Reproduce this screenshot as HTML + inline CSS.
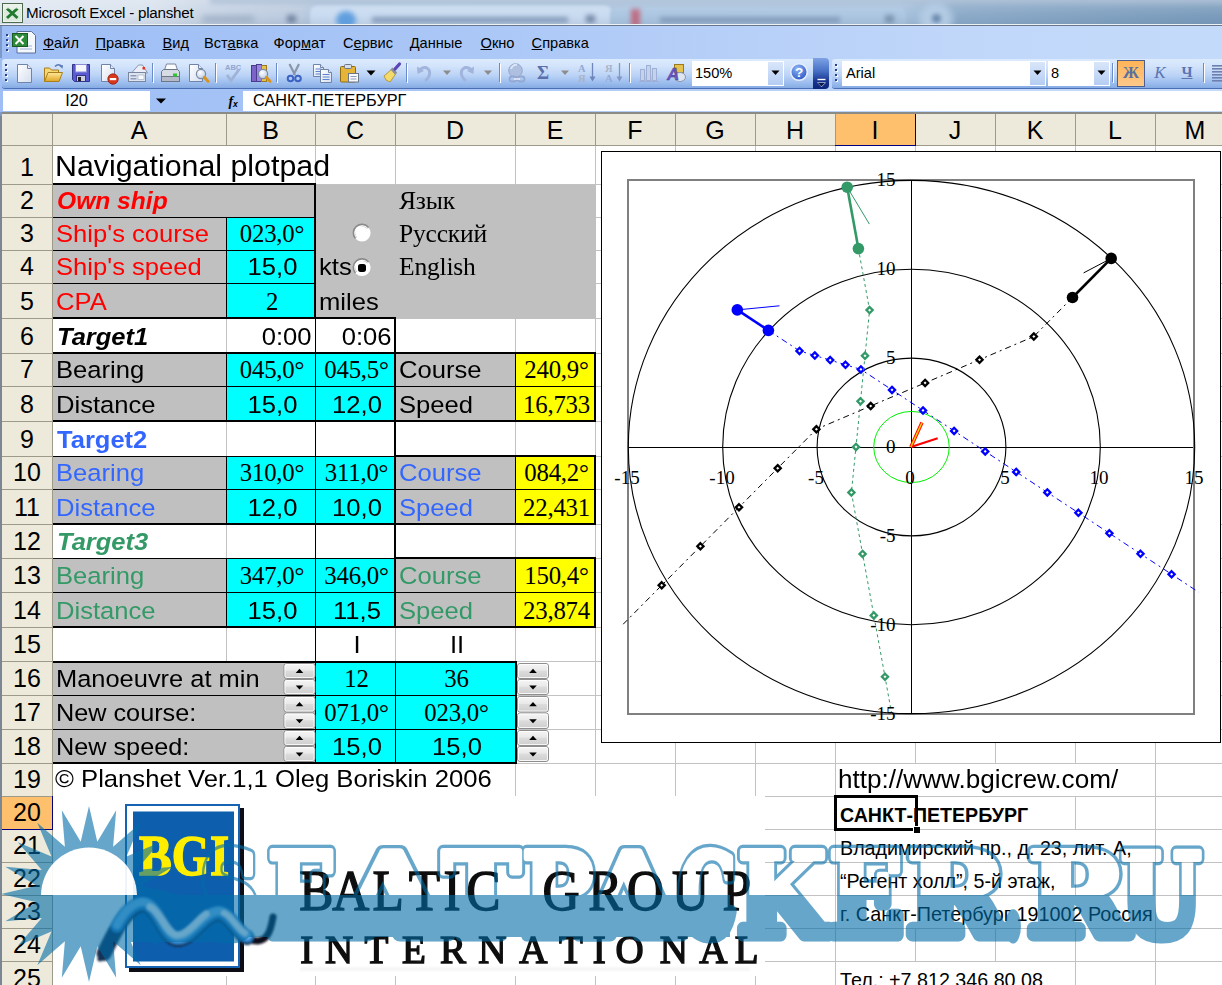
<!DOCTYPE html>
<html><head><meta charset="utf-8"><title>Microsoft Excel - planshet</title>
<style>
html,body{margin:0;padding:0}
body{width:1222px;height:985px;overflow:hidden;position:relative;background:#fff;font-family:"Liberation Sans",sans-serif}
.abs{position:absolute}
.t{position:absolute;white-space:nowrap;line-height:40px;height:40px;color:#000;font-family:"Liberation Sans",sans-serif;font-size:25px}
.mn{font:14.6px/22px "Liberation Sans",sans-serif;color:#000;white-space:nowrap;text-align:center}
.tb{font:14.6px/22px "Liberation Sans",sans-serif;color:#000;white-space:nowrap}

</style></head>
<body>
<svg class="abs" style="left:0;top:0" width="1222" height="985" viewBox="0 0 1222 985" shape-rendering="crispEdges"><rect x="0" y="112" width="1222" height="873" fill="#fff"/><rect x="226" y="146" width="1" height="839" fill="#c2c2c2"/><rect x="315" y="146" width="1" height="839" fill="#c2c2c2"/><rect x="395" y="146" width="1" height="839" fill="#c2c2c2"/><rect x="515" y="146" width="1" height="839" fill="#c2c2c2"/><rect x="595" y="146" width="1" height="839" fill="#c2c2c2"/><rect x="675" y="146" width="1" height="839" fill="#c2c2c2"/><rect x="755" y="146" width="1" height="839" fill="#c2c2c2"/><rect x="835" y="146" width="1" height="839" fill="#c2c2c2"/><rect x="915" y="146" width="1" height="839" fill="#c2c2c2"/><rect x="995" y="146" width="1" height="839" fill="#c2c2c2"/><rect x="1075" y="146" width="1" height="839" fill="#c2c2c2"/><rect x="1155" y="146" width="1" height="839" fill="#c2c2c2"/><rect x="1235" y="146" width="1" height="839" fill="#c2c2c2"/><rect x="53" y="184" width="1169" height="1" fill="#c2c2c2"/><rect x="53" y="217" width="1169" height="1" fill="#c2c2c2"/><rect x="53" y="250" width="1169" height="1" fill="#c2c2c2"/><rect x="53" y="283" width="1169" height="1" fill="#c2c2c2"/><rect x="53" y="318" width="1169" height="1" fill="#c2c2c2"/><rect x="53" y="353" width="1169" height="1" fill="#c2c2c2"/><rect x="53" y="386" width="1169" height="1" fill="#c2c2c2"/><rect x="53" y="421" width="1169" height="1" fill="#c2c2c2"/><rect x="53" y="456" width="1169" height="1" fill="#c2c2c2"/><rect x="53" y="489" width="1169" height="1" fill="#c2c2c2"/><rect x="53" y="524" width="1169" height="1" fill="#c2c2c2"/><rect x="53" y="558" width="1169" height="1" fill="#c2c2c2"/><rect x="53" y="592" width="1169" height="1" fill="#c2c2c2"/><rect x="53" y="627" width="1169" height="1" fill="#c2c2c2"/><rect x="53" y="661" width="1169" height="1" fill="#c2c2c2"/><rect x="53" y="695" width="1169" height="1" fill="#c2c2c2"/><rect x="53" y="729" width="1169" height="1" fill="#c2c2c2"/><rect x="53" y="763" width="1169" height="1" fill="#c2c2c2"/><rect x="53" y="796" width="1169" height="1" fill="#c2c2c2"/><rect x="53" y="829" width="1169" height="1" fill="#c2c2c2"/><rect x="53" y="862" width="1169" height="1" fill="#c2c2c2"/><rect x="53" y="895" width="1169" height="1" fill="#c2c2c2"/><rect x="53" y="928" width="1169" height="1" fill="#c2c2c2"/><rect x="53" y="961" width="1169" height="1" fill="#c2c2c2"/><rect x="53" y="995" width="1169" height="1" fill="#c2c2c2"/><rect x="226" y="146" width="1" height="37" fill="#fff"/><rect x="226" y="764" width="1" height="32" fill="#fff"/><rect x="315" y="764" width="1" height="32" fill="#fff"/><rect x="395" y="764" width="1" height="32" fill="#fff"/><rect x="915" y="764" width="1" height="32" fill="#fff"/><rect x="995" y="764" width="1" height="32" fill="#fff"/><rect x="1075" y="764" width="1" height="32" fill="#fff"/><rect x="915" y="797" width="1" height="32" fill="#fff"/><rect x="995" y="797" width="1" height="32" fill="#fff"/><rect x="915" y="830" width="1" height="32" fill="#fff"/><rect x="995" y="830" width="1" height="32" fill="#fff"/><rect x="1075" y="830" width="1" height="32" fill="#fff"/><rect x="915" y="863" width="1" height="32" fill="#fff"/><rect x="995" y="863" width="1" height="32" fill="#fff"/><rect x="915" y="896" width="1" height="32" fill="#fff"/><rect x="995" y="896" width="1" height="32" fill="#fff"/><rect x="1075" y="896" width="1" height="32" fill="#fff"/><rect x="915" y="962" width="1" height="23" fill="#fff"/><rect x="995" y="962" width="1" height="23" fill="#fff"/><rect x="53" y="185" width="263" height="33" fill="#c0c0c0"/><rect x="53" y="218" width="174" height="101" fill="#c0c0c0"/><rect x="227" y="218" width="89" height="101" fill="#00ffff"/><rect x="316" y="185" width="280" height="134" fill="#c0c0c0"/><rect x="53" y="354" width="174" height="68" fill="#c0c0c0"/><rect x="227" y="354" width="169" height="68" fill="#00ffff"/><rect x="396" y="354" width="120" height="68" fill="#c0c0c0"/><rect x="516" y="354" width="80" height="68" fill="#ffff00"/><rect x="53" y="457" width="174" height="68" fill="#c0c0c0"/><rect x="227" y="457" width="169" height="68" fill="#00ffff"/><rect x="396" y="457" width="120" height="68" fill="#c0c0c0"/><rect x="516" y="457" width="80" height="68" fill="#ffff00"/><rect x="53" y="559" width="174" height="69" fill="#c0c0c0"/><rect x="227" y="559" width="169" height="69" fill="#00ffff"/><rect x="396" y="559" width="120" height="69" fill="#c0c0c0"/><rect x="516" y="559" width="80" height="69" fill="#ffff00"/><rect x="53" y="662" width="263" height="102" fill="#c0c0c0"/><rect x="316" y="662" width="200" height="102" fill="#00ffff"/><rect x="52" y="183" width="264" height="2" fill="#000"/><rect x="314" y="183" width="2" height="136" fill="#000"/><rect x="53" y="217" width="262" height="1" fill="#000"/><rect x="53" y="250" width="262" height="1" fill="#000"/><rect x="53" y="283" width="262" height="1" fill="#000"/><rect x="226" y="217" width="1" height="101" fill="#000"/><rect x="52" y="317" width="344" height="2" fill="#000"/><rect x="315" y="319" width="1" height="34" fill="#000"/><rect x="394" y="317" width="2" height="311" fill="#000"/><rect x="52" y="352" width="544" height="2" fill="#000"/><rect x="53" y="386" width="542" height="1" fill="#000"/><rect x="226" y="353" width="1" height="68" fill="#000"/><rect x="315" y="353" width="1" height="68" fill="#000"/><rect x="515" y="353" width="1" height="68" fill="#000"/><rect x="594" y="352" width="2" height="70" fill="#000"/><rect x="52" y="420" width="544" height="2" fill="#000"/><rect x="53" y="489" width="542" height="1" fill="#000"/><rect x="226" y="456" width="1" height="68" fill="#000"/><rect x="315" y="456" width="1" height="68" fill="#000"/><rect x="515" y="456" width="1" height="68" fill="#000"/><rect x="594" y="455" width="2" height="70" fill="#000"/><rect x="52" y="523" width="544" height="2" fill="#000"/><rect x="53" y="592" width="542" height="1" fill="#000"/><rect x="226" y="558" width="1" height="69" fill="#000"/><rect x="315" y="558" width="1" height="69" fill="#000"/><rect x="515" y="558" width="1" height="69" fill="#000"/><rect x="594" y="557" width="2" height="71" fill="#000"/><rect x="52" y="626" width="544" height="2" fill="#000"/><rect x="315" y="421" width="1" height="35" fill="#000"/><rect x="53" y="456" width="342" height="1" fill="#000"/><rect x="394" y="455" width="202" height="2" fill="#000"/><rect x="315" y="524" width="1" height="34" fill="#000"/><rect x="53" y="558" width="342" height="1" fill="#000"/><rect x="394" y="557" width="202" height="2" fill="#000"/><rect x="315" y="627" width="1" height="34" fill="#000"/><rect x="52" y="661" width="465" height="2" fill="#000"/><rect x="52" y="762" width="465" height="2" fill="#000"/><rect x="515" y="661" width="2" height="103" fill="#000"/><rect x="53" y="695" width="462" height="1" fill="#000"/><rect x="53" y="729" width="462" height="1" fill="#000"/><rect x="395" y="661" width="1" height="102" fill="#000"/><rect x="315" y="661" width="1" height="102" fill="#000"/><rect x="0" y="112" width="1222" height="34" fill="#eeeadb"/><rect x="0" y="146" width="53" height="839" fill="#eeeadb"/><rect x="0" y="112" width="1222" height="2" fill="#8a8a86"/><rect x="0" y="112" width="2" height="873" fill="#7b8694"/><rect x="52" y="114" width="1" height="31" fill="#9d9a8a"/><rect x="226" y="114" width="1" height="31" fill="#9d9a8a"/><rect x="315" y="114" width="1" height="31" fill="#9d9a8a"/><rect x="395" y="114" width="1" height="31" fill="#9d9a8a"/><rect x="515" y="114" width="1" height="31" fill="#9d9a8a"/><rect x="595" y="114" width="1" height="31" fill="#9d9a8a"/><rect x="675" y="114" width="1" height="31" fill="#9d9a8a"/><rect x="755" y="114" width="1" height="31" fill="#9d9a8a"/><rect x="835" y="114" width="1" height="31" fill="#9d9a8a"/><rect x="915" y="114" width="1" height="31" fill="#9d9a8a"/><rect x="995" y="114" width="1" height="31" fill="#9d9a8a"/><rect x="1075" y="114" width="1" height="31" fill="#9d9a8a"/><rect x="1155" y="114" width="1" height="31" fill="#9d9a8a"/><rect x="1235" y="114" width="1" height="31" fill="#9d9a8a"/><rect x="2" y="145" width="1220" height="1" fill="#9d9a8a"/><rect x="2" y="184" width="51" height="1" fill="#9d9a8a"/><rect x="2" y="217" width="51" height="1" fill="#9d9a8a"/><rect x="2" y="250" width="51" height="1" fill="#9d9a8a"/><rect x="2" y="283" width="51" height="1" fill="#9d9a8a"/><rect x="2" y="318" width="51" height="1" fill="#9d9a8a"/><rect x="2" y="353" width="51" height="1" fill="#9d9a8a"/><rect x="2" y="386" width="51" height="1" fill="#9d9a8a"/><rect x="2" y="421" width="51" height="1" fill="#9d9a8a"/><rect x="2" y="456" width="51" height="1" fill="#9d9a8a"/><rect x="2" y="489" width="51" height="1" fill="#9d9a8a"/><rect x="2" y="524" width="51" height="1" fill="#9d9a8a"/><rect x="2" y="558" width="51" height="1" fill="#9d9a8a"/><rect x="2" y="592" width="51" height="1" fill="#9d9a8a"/><rect x="2" y="627" width="51" height="1" fill="#9d9a8a"/><rect x="2" y="661" width="51" height="1" fill="#9d9a8a"/><rect x="2" y="695" width="51" height="1" fill="#9d9a8a"/><rect x="2" y="729" width="51" height="1" fill="#9d9a8a"/><rect x="2" y="763" width="51" height="1" fill="#9d9a8a"/><rect x="2" y="796" width="51" height="1" fill="#9d9a8a"/><rect x="2" y="829" width="51" height="1" fill="#9d9a8a"/><rect x="2" y="862" width="51" height="1" fill="#9d9a8a"/><rect x="2" y="895" width="51" height="1" fill="#9d9a8a"/><rect x="2" y="928" width="51" height="1" fill="#9d9a8a"/><rect x="2" y="961" width="51" height="1" fill="#9d9a8a"/><rect x="2" y="995" width="51" height="1" fill="#9d9a8a"/><rect x="52" y="146" width="1" height="839" fill="#9d9a8a"/><rect x="836" y="114" width="79" height="31" fill="#ffc06e"/><rect x="835" y="145" width="81" height="1" fill="#000080"/><rect x="915" y="114" width="1" height="32" fill="#000080"/><rect x="2" y="797" width="50" height="32" fill="#ffc06e"/><rect x="2" y="829" width="51" height="1" fill="#000080"/><rect x="52" y="796" width="1" height="34" fill="#000080"/></svg>
<div class="t" style="left:52px;top:110.34px;font-size:25px;width:174px;text-align:center;">A</div>
<div class="t" style="left:226px;top:110.34px;font-size:25px;width:89px;text-align:center;">B</div>
<div class="t" style="left:315px;top:110.34px;font-size:25px;width:80px;text-align:center;">C</div>
<div class="t" style="left:395px;top:110.34px;font-size:25px;width:120px;text-align:center;">D</div>
<div class="t" style="left:515px;top:110.34px;font-size:25px;width:80px;text-align:center;">E</div>
<div class="t" style="left:595px;top:110.34px;font-size:25px;width:80px;text-align:center;">F</div>
<div class="t" style="left:675px;top:110.34px;font-size:25px;width:80px;text-align:center;">G</div>
<div class="t" style="left:755px;top:110.34px;font-size:25px;width:80px;text-align:center;">H</div>
<div class="t" style="left:835px;top:110.34px;font-size:25px;width:80px;text-align:center;">I</div>
<div class="t" style="left:915px;top:110.34px;font-size:25px;width:80px;text-align:center;">J</div>
<div class="t" style="left:995px;top:110.34px;font-size:25px;width:80px;text-align:center;">K</div>
<div class="t" style="left:1075px;top:110.34px;font-size:25px;width:80px;text-align:center;">L</div>
<div class="t" style="left:1155px;top:110.34px;font-size:25px;width:80px;text-align:center;">M</div>
<div class="t" style="left:2px;top:147.34px;font-size:25px;width:50px;text-align:center;">1</div>
<div class="t" style="left:2px;top:180.34px;font-size:25px;width:50px;text-align:center;">2</div>
<div class="t" style="left:2px;top:213.34px;font-size:25px;width:50px;text-align:center;">3</div>
<div class="t" style="left:2px;top:246.34px;font-size:25px;width:50px;text-align:center;">4</div>
<div class="t" style="left:2px;top:281.34px;font-size:25px;width:50px;text-align:center;">5</div>
<div class="t" style="left:2px;top:316.34px;font-size:25px;width:50px;text-align:center;">6</div>
<div class="t" style="left:2px;top:349.34px;font-size:25px;width:50px;text-align:center;">7</div>
<div class="t" style="left:2px;top:384.34px;font-size:25px;width:50px;text-align:center;">8</div>
<div class="t" style="left:2px;top:419.34px;font-size:25px;width:50px;text-align:center;">9</div>
<div class="t" style="left:2px;top:452.34px;font-size:25px;width:50px;text-align:center;">10</div>
<div class="t" style="left:2px;top:487.34px;font-size:25px;width:50px;text-align:center;">11</div>
<div class="t" style="left:2px;top:521.34px;font-size:25px;width:50px;text-align:center;">12</div>
<div class="t" style="left:2px;top:555.34px;font-size:25px;width:50px;text-align:center;">13</div>
<div class="t" style="left:2px;top:590.34px;font-size:25px;width:50px;text-align:center;">14</div>
<div class="t" style="left:2px;top:624.34px;font-size:25px;width:50px;text-align:center;">15</div>
<div class="t" style="left:2px;top:658.34px;font-size:25px;width:50px;text-align:center;">16</div>
<div class="t" style="left:2px;top:692.34px;font-size:25px;width:50px;text-align:center;">17</div>
<div class="t" style="left:2px;top:726.34px;font-size:25px;width:50px;text-align:center;">18</div>
<div class="t" style="left:2px;top:759.34px;font-size:25px;width:50px;text-align:center;">19</div>
<div class="t" style="left:2px;top:792.34px;font-size:25px;width:50px;text-align:center;">20</div>
<div class="t" style="left:2px;top:825.34px;font-size:25px;width:50px;text-align:center;">21</div>
<div class="t" style="left:2px;top:858.34px;font-size:25px;width:50px;text-align:center;">22</div>
<div class="t" style="left:2px;top:891.34px;font-size:25px;width:50px;text-align:center;">23</div>
<div class="t" style="left:2px;top:924.34px;font-size:25px;width:50px;text-align:center;">24</div>
<div class="t" style="left:2px;top:958.34px;font-size:25px;width:50px;text-align:center;">25</div>
<div class="t" style="left:55px;top:145.93px;font-size:29.05px;transform:scaleX(1.045);transform-origin:left center;">Navigational plotpad</div>
<div class="t" style="left:56.800000000000004px;top:180.58px;font-size:24.3px;font-weight:bold;font-style:italic;color:#ff0000;transform:scaleX(1.012);transform-origin:left center;">Own ship</div>
<div class="t" style="left:55.6px;top:213.51px;font-size:24.5px;color:#ff0000;transform:scaleX(1.045);transform-origin:left center;">Ship's course</div>
<div class="t" style="left:55.6px;top:246.51px;font-size:24.5px;color:#ff0000;transform:scaleX(1.045);transform-origin:left center;">Ship's speed</div>
<div class="t" style="left:55.6px;top:281.51px;font-size:24.5px;color:#ff0000;transform:scaleX(1.045);transform-origin:left center;">CPA</div>
<div class="t" style="left:227.5px;top:213.63px;font-size:24.8px;font-family:'Liberation Serif',serif;letter-spacing:-0.2px;width:89px;text-align:center;">023,0°</div>
<div class="t" style="left:227.5px;top:246.51px;font-size:24.5px;width:89px;text-align:center;transform:scaleX(1.045);transform-origin:center center;">15,0</div>
<div class="t" style="left:227.5px;top:281.63px;font-size:24.8px;font-family:'Liberation Serif',serif;letter-spacing:-0.2px;width:89px;text-align:center;">2</div>
<div class="t" style="left:318.6px;top:246.51px;font-size:24.5px;transform:scaleX(1.045);transform-origin:left center;">kts</div>
<div class="t" style="left:318.6px;top:281.51px;font-size:24.5px;transform:scaleX(1.045);transform-origin:left center;">miles</div>
<div class="t" style="left:398.5px;top:181.16px;font-size:24.7px;font-family:'Liberation Serif',serif;letter-spacing:-0.2px;transform:scaleX(1.035);transform-origin:left center;">Язык</div>
<div class="t" style="left:398.5px;top:214.16px;font-size:24.7px;font-family:'Liberation Serif',serif;letter-spacing:-0.2px;transform:scaleX(1.035);transform-origin:left center;">Русский</div>
<div class="t" style="left:398.5px;top:247.16px;font-size:24.7px;font-family:'Liberation Serif',serif;letter-spacing:-0.2px;transform:scaleX(1.035);transform-origin:left center;">English</div>
<div class="t" style="left:56.800000000000004px;top:316.58px;font-size:24.3px;font-weight:bold;font-style:italic;transform:scaleX(1.05);transform-origin:left center;">Target1</div>
<div class="t" style="left:226px;top:316.51px;font-size:24.5px;width:85.5px;text-align:right;transform:scaleX(1.045);transform-origin:right center;">0:00</div>
<div class="t" style="left:315px;top:316.51px;font-size:24.5px;width:76.5px;text-align:right;transform:scaleX(1.045);transform-origin:right center;">0:06</div>
<div class="t" style="left:55.6px;top:349.51px;font-size:24.5px;transform:scaleX(1.045);transform-origin:left center;">Bearing</div>
<div class="t" style="left:55.6px;top:384.51px;font-size:24.5px;transform:scaleX(1.045);transform-origin:left center;">Distance</div>
<div class="t" style="left:227.5px;top:349.63px;font-size:24.8px;font-family:'Liberation Serif',serif;letter-spacing:-0.2px;width:89px;text-align:center;">045,0°</div>
<div class="t" style="left:316.5px;top:349.63px;font-size:24.8px;font-family:'Liberation Serif',serif;letter-spacing:-0.2px;width:80px;text-align:center;">045,5°</div>
<div class="t" style="left:227.5px;top:384.51px;font-size:24.5px;width:89px;text-align:center;transform:scaleX(1.045);transform-origin:center center;">15,0</div>
<div class="t" style="left:316.5px;top:384.51px;font-size:24.5px;width:80px;text-align:center;transform:scaleX(1.045);transform-origin:center center;">12,0</div>
<div class="t" style="left:399.40000000000003px;top:349.51px;font-size:24.5px;transform:scaleX(1.045);transform-origin:left center;">Course</div>
<div class="t" style="left:399.40000000000003px;top:384.51px;font-size:24.5px;transform:scaleX(1.045);transform-origin:left center;">Speed</div>
<div class="t" style="left:516.5px;top:349.63px;font-size:24.8px;font-family:'Liberation Serif',serif;letter-spacing:-0.2px;width:80px;text-align:center;">240,9°</div>
<div class="t" style="left:516.5px;top:384.63px;font-size:24.8px;font-family:'Liberation Serif',serif;letter-spacing:-0.2px;width:80px;text-align:center;">16,733</div>
<div class="t" style="left:56.800000000000004px;top:419.58px;font-size:24.3px;font-weight:bold;color:#3366ff;transform:scaleX(1.05);transform-origin:left center;">Target2</div>
<div class="t" style="left:55.6px;top:452.51px;font-size:24.5px;color:#3366ff;transform:scaleX(1.045);transform-origin:left center;">Bearing</div>
<div class="t" style="left:55.6px;top:487.51px;font-size:24.5px;color:#3366ff;transform:scaleX(1.045);transform-origin:left center;">Distance</div>
<div class="t" style="left:227.5px;top:452.63px;font-size:24.8px;font-family:'Liberation Serif',serif;letter-spacing:-0.2px;width:89px;text-align:center;">310,0°</div>
<div class="t" style="left:316.5px;top:452.63px;font-size:24.8px;font-family:'Liberation Serif',serif;letter-spacing:-0.2px;width:80px;text-align:center;">311,0°</div>
<div class="t" style="left:227.5px;top:487.51px;font-size:24.5px;width:89px;text-align:center;transform:scaleX(1.045);transform-origin:center center;">12,0</div>
<div class="t" style="left:316.5px;top:487.51px;font-size:24.5px;width:80px;text-align:center;transform:scaleX(1.045);transform-origin:center center;">10,0</div>
<div class="t" style="left:399.40000000000003px;top:452.51px;font-size:24.5px;color:#3366ff;transform:scaleX(1.045);transform-origin:left center;">Course</div>
<div class="t" style="left:399.40000000000003px;top:487.51px;font-size:24.5px;color:#3366ff;transform:scaleX(1.045);transform-origin:left center;">Speed</div>
<div class="t" style="left:516.5px;top:452.63px;font-size:24.8px;font-family:'Liberation Serif',serif;letter-spacing:-0.2px;width:80px;text-align:center;">084,2°</div>
<div class="t" style="left:516.5px;top:487.63px;font-size:24.8px;font-family:'Liberation Serif',serif;letter-spacing:-0.2px;width:80px;text-align:center;">22,431</div>
<div class="t" style="left:56.800000000000004px;top:521.58px;font-size:24.3px;font-weight:bold;font-style:italic;color:#339966;transform:scaleX(1.05);transform-origin:left center;">Target3</div>
<div class="t" style="left:55.6px;top:555.51px;font-size:24.5px;color:#339966;transform:scaleX(1.045);transform-origin:left center;">Bearing</div>
<div class="t" style="left:55.6px;top:590.51px;font-size:24.5px;color:#339966;transform:scaleX(1.045);transform-origin:left center;">Distance</div>
<div class="t" style="left:227.5px;top:555.63px;font-size:24.8px;font-family:'Liberation Serif',serif;letter-spacing:-0.2px;width:89px;text-align:center;">347,0°</div>
<div class="t" style="left:316.5px;top:555.63px;font-size:24.8px;font-family:'Liberation Serif',serif;letter-spacing:-0.2px;width:80px;text-align:center;">346,0°</div>
<div class="t" style="left:227.5px;top:590.51px;font-size:24.5px;width:89px;text-align:center;transform:scaleX(1.045);transform-origin:center center;">15,0</div>
<div class="t" style="left:316.5px;top:590.51px;font-size:24.5px;width:80px;text-align:center;transform:scaleX(1.045);transform-origin:center center;">11,5</div>
<div class="t" style="left:399.40000000000003px;top:555.51px;font-size:24.5px;color:#339966;transform:scaleX(1.045);transform-origin:left center;">Course</div>
<div class="t" style="left:399.40000000000003px;top:590.51px;font-size:24.5px;color:#339966;transform:scaleX(1.045);transform-origin:left center;">Speed</div>
<div class="t" style="left:516.5px;top:555.63px;font-size:24.8px;font-family:'Liberation Serif',serif;letter-spacing:-0.2px;width:80px;text-align:center;">150,4°</div>
<div class="t" style="left:516.5px;top:590.63px;font-size:24.8px;font-family:'Liberation Serif',serif;letter-spacing:-0.2px;width:80px;text-align:center;">23,874</div>
<div class="t" style="left:316.5px;top:624.51px;font-size:24.5px;width:80px;text-align:center;transform:scaleX(1.045);transform-origin:center center;">I</div>
<div class="t" style="left:396.5px;top:624.51px;font-size:24.5px;width:120px;text-align:center;transform:scaleX(1.045);transform-origin:center center;">II</div>
<div class="t" style="left:55.6px;top:658.51px;font-size:24.5px;transform:scaleX(1.045);transform-origin:left center;transform:scaleX(1.038)">Manoeuvre at min</div>
<div class="t" style="left:55.6px;top:692.51px;font-size:24.5px;transform:scaleX(1.045);transform-origin:left center;transform:scaleX(1.03)">New course:</div>
<div class="t" style="left:55.6px;top:726.51px;font-size:24.5px;transform:scaleX(1.045);transform-origin:left center;transform:scaleX(1.03)">New speed:</div>
<div class="t" style="left:316.5px;top:658.63px;font-size:24.8px;font-family:'Liberation Serif',serif;letter-spacing:-0.2px;width:80px;text-align:center;">12</div>
<div class="t" style="left:396.5px;top:658.63px;font-size:24.8px;font-family:'Liberation Serif',serif;letter-spacing:-0.2px;width:120px;text-align:center;">36</div>
<div class="t" style="left:316.5px;top:692.63px;font-size:24.8px;font-family:'Liberation Serif',serif;letter-spacing:-0.2px;width:80px;text-align:center;">071,0°</div>
<div class="t" style="left:396.5px;top:692.63px;font-size:24.8px;font-family:'Liberation Serif',serif;letter-spacing:-0.2px;width:120px;text-align:center;">023,0°</div>
<div class="t" style="left:316.5px;top:726.51px;font-size:24.5px;width:80px;text-align:center;transform:scaleX(1.045);transform-origin:center center;">15,0</div>
<div class="t" style="left:396.5px;top:726.51px;font-size:24.5px;width:120px;text-align:center;transform:scaleX(1.045);transform-origin:center center;">15,0</div>
<div class="t" style="left:55px;top:759.48px;font-size:24.6px;transform:scaleX(1.045);transform-origin:left center;transform:scaleX(1.043)">© Planshet Ver.1,1 Oleg Boriskin 2006</div>
<div class="t" style="left:837.5px;top:759.34px;font-size:25.0px;transform:scaleX(1.045);transform-origin:left center;">http://www.bgicrew.com/</div>
<svg class="abs" style="left:0;top:0" width="1222" height="985" viewBox="0 0 1222 985"><defs><linearGradient id="sb" x1="0" y1="0" x2="0" y2="1"><stop offset="0" stop-color="#f6f6f6"/><stop offset=".45" stop-color="#e9e9e9"/><stop offset=".5" stop-color="#dcdcdc"/><stop offset="1" stop-color="#cdcdcd"/></linearGradient></defs><circle cx="362" cy="233" r="8.6" fill="#fff"/><path d="M355.4 238.6A8.6 8.6 0 0 1 368.6 227.4" fill="none" stroke="#8a8a8a" stroke-width="1.6"/><path d="M356.8 237.2A6.8 6.8 0 0 1 367.2 228.8" fill="none" stroke="#555" stroke-width="1.1" opacity=".55"/><circle cx="362" cy="233" r="6.6" fill="#fff"/><circle cx="362" cy="267.5" r="8.6" fill="#fff"/><path d="M355.4 273.1A8.6 8.6 0 0 1 368.6 261.9" fill="none" stroke="#8a8a8a" stroke-width="1.6"/><path d="M356.8 271.7A6.8 6.8 0 0 1 367.2 263.3" fill="none" stroke="#555" stroke-width="1.1" opacity=".55"/><circle cx="362" cy="267.5" r="6.6" fill="#fff"/><rect x="358" y="263.9" width="8" height="8" rx="2.6" fill="#000"/><rect x="284.0" y="663.5" width="31" height="15.0" rx="2.5" fill="url(#sb)" stroke="#8e8e8e"/><rect x="285.0" y="664.5" width="29" height="13.0" rx="1.5" fill="none" stroke="#fff" opacity=".8"/><path d="M295.7 673.0h7.6l-3.8-4.2z" fill="#000"/><rect x="284.0" y="679.5" width="31" height="15.0" rx="2.5" fill="url(#sb)" stroke="#8e8e8e"/><rect x="285.0" y="680.5" width="29" height="13.0" rx="1.5" fill="none" stroke="#fff" opacity=".8"/><path d="M295.7 685.4h7.6l-3.8 4.2z" fill="#000"/><rect x="517.5" y="663.5" width="31" height="15.0" rx="2.5" fill="url(#sb)" stroke="#8e8e8e"/><rect x="518.5" y="664.5" width="29" height="13.0" rx="1.5" fill="none" stroke="#fff" opacity=".8"/><path d="M529.2 673.0h7.6l-3.8-4.2z" fill="#000"/><rect x="517.5" y="679.5" width="31" height="15.0" rx="2.5" fill="url(#sb)" stroke="#8e8e8e"/><rect x="518.5" y="680.5" width="29" height="13.0" rx="1.5" fill="none" stroke="#fff" opacity=".8"/><path d="M529.2 685.4h7.6l-3.8 4.2z" fill="#000"/><rect x="284.0" y="696.5" width="31" height="15.5" rx="2.5" fill="url(#sb)" stroke="#8e8e8e"/><rect x="285.0" y="697.5" width="29" height="13.5" rx="1.5" fill="none" stroke="#fff" opacity=".8"/><path d="M295.7 706.25h7.6l-3.8-4.2z" fill="#000"/><rect x="284.0" y="713.0" width="31" height="15.5" rx="2.5" fill="url(#sb)" stroke="#8e8e8e"/><rect x="285.0" y="714.0" width="29" height="13.5" rx="1.5" fill="none" stroke="#fff" opacity=".8"/><path d="M295.7 719.15h7.6l-3.8 4.2z" fill="#000"/><rect x="517.5" y="696.5" width="31" height="15.5" rx="2.5" fill="url(#sb)" stroke="#8e8e8e"/><rect x="518.5" y="697.5" width="29" height="13.5" rx="1.5" fill="none" stroke="#fff" opacity=".8"/><path d="M529.2 706.25h7.6l-3.8-4.2z" fill="#000"/><rect x="517.5" y="713.0" width="31" height="15.5" rx="2.5" fill="url(#sb)" stroke="#8e8e8e"/><rect x="518.5" y="714.0" width="29" height="13.5" rx="1.5" fill="none" stroke="#fff" opacity=".8"/><path d="M529.2 719.15h7.6l-3.8 4.2z" fill="#000"/><rect x="284.0" y="730.5" width="31" height="15.0" rx="2.5" fill="url(#sb)" stroke="#8e8e8e"/><rect x="285.0" y="731.5" width="29" height="13.0" rx="1.5" fill="none" stroke="#fff" opacity=".8"/><path d="M295.7 740.0h7.6l-3.8-4.2z" fill="#000"/><rect x="284.0" y="746.5" width="31" height="15.0" rx="2.5" fill="url(#sb)" stroke="#8e8e8e"/><rect x="285.0" y="747.5" width="29" height="13.0" rx="1.5" fill="none" stroke="#fff" opacity=".8"/><path d="M295.7 752.4h7.6l-3.8 4.2z" fill="#000"/><rect x="517.5" y="730.5" width="31" height="15.0" rx="2.5" fill="url(#sb)" stroke="#8e8e8e"/><rect x="518.5" y="731.5" width="29" height="13.0" rx="1.5" fill="none" stroke="#fff" opacity=".8"/><path d="M529.2 740.0h7.6l-3.8-4.2z" fill="#000"/><rect x="517.5" y="746.5" width="31" height="15.0" rx="2.5" fill="url(#sb)" stroke="#8e8e8e"/><rect x="518.5" y="747.5" width="29" height="13.0" rx="1.5" fill="none" stroke="#fff" opacity=".8"/><path d="M529.2 752.4h7.6l-3.8 4.2z" fill="#000"/></svg>
<svg class="abs" style="left:0;top:0" width="1222" height="985" viewBox="0 0 1222 985">
<rect x="601.5" y="151.5" width="619" height="591" fill="#fff" stroke="#000" stroke-width="1" shape-rendering="crispEdges"/>
<rect x="628" y="180" width="566" height="534" fill="#fff" stroke="#808080" stroke-width="2" shape-rendering="crispEdges"/>
<ellipse cx="911.5" cy="447.0" rx="94.40" ry="88.88" fill="none" stroke="#000" stroke-width="1.1"/>
<ellipse cx="911.5" cy="447.0" rx="188.80" ry="177.77" fill="none" stroke="#000" stroke-width="1.1"/>
<ellipse cx="911.5" cy="447.0" rx="283.20" ry="266.65" fill="none" stroke="#000" stroke-width="1.1"/>
<line x1="629" y1="447.5" x2="1193" y2="447.5" stroke="#000" stroke-width="1" shape-rendering="crispEdges"/>
<line x1="911.5" y1="181" x2="911.5" y2="713" stroke="#000" stroke-width="1" shape-rendering="crispEdges"/>
<ellipse cx="911.5" cy="447.0" rx="37.76" ry="35.55" fill="none" stroke="#00f000" stroke-width="1"/>
<defs><clipPath id="pc"><rect x="622.5" y="175" width="576" height="541.5"/></clipPath></defs>
<path d="M1072.5 297.5 L1033.8 336.5 L979.5 359.7 L925.1 382.9 L870.7 406.0 L816.4 429.2 L777.7 468.2 L739.0 507.3 L700.4 546.3 L661.7 585.3 L623.1 624.3 L584.4 663.4" fill="none" stroke="#000" stroke-width="1" stroke-dasharray="6 4 2 4" clip-path="url(#pc)"/>
<path d="M1033.8 333.4L1036.9 336.5L1033.8 339.6L1030.7 336.5Z" fill="#fff" stroke="#000" stroke-width="2.3"/>
<path d="M979.5 356.6L982.6 359.7L979.5 362.8L976.4 359.7Z" fill="#fff" stroke="#000" stroke-width="2.3"/>
<path d="M925.1 379.8L928.2 382.9L925.1 386.0L922.0 382.9Z" fill="#fff" stroke="#000" stroke-width="2.3"/>
<path d="M870.7 402.9L873.8 406.0L870.7 409.1L867.6 406.0Z" fill="#fff" stroke="#000" stroke-width="2.3"/>
<path d="M816.4 426.1L819.5 429.2L816.4 432.3L813.3 429.2Z" fill="#fff" stroke="#000" stroke-width="2.3"/>
<path d="M777.7 465.1L780.8 468.2L777.7 471.3L774.6 468.2Z" fill="#fff" stroke="#000" stroke-width="2.3"/>
<path d="M739.0 504.2L742.1 507.3L739.0 510.4L735.9 507.3Z" fill="#fff" stroke="#000" stroke-width="2.3"/>
<path d="M700.4 543.2L703.5 546.3L700.4 549.4L697.3 546.3Z" fill="#fff" stroke="#000" stroke-width="2.3"/>
<path d="M661.7 582.2L664.8 585.3L661.7 588.4L658.6 585.3Z" fill="#fff" stroke="#000" stroke-width="2.3"/>
<line x1="1111.2" y1="258.4" x2="1083.6" y2="272.9" stroke="#000" stroke-width="1"/>
<line x1="1111.2" y1="258.4" x2="1072.5" y2="297.5" stroke="#000" stroke-width="2.6"/>
<circle cx="1111.2" cy="258.4" r="5.8" fill="#000"/>
<circle cx="1072.5" cy="297.5" r="5.8" fill="#000"/>
<path d="M768.4 330.4 L799.5 350.9 L814.8 355.5 L830.2 360.1 L845.5 364.8 L860.9 369.4 L892.0 389.9 L923.0 410.4 L954.1 430.9 L985.2 451.4 L1016.2 471.9 L1047.3 492.4 L1078.4 512.8 L1109.4 533.3 L1140.5 553.8 L1171.6 574.3 L1202.6 594.8" fill="none" stroke="#0000ff" stroke-width="1" stroke-dasharray="6 4 2 4" clip-path="url(#pc)"/>
<path d="M799.5 347.8L802.6 350.9L799.5 354.0L796.4 350.9Z" fill="#fff" stroke="#0000ff" stroke-width="2.3"/>
<path d="M814.8 352.4L817.9 355.5L814.8 358.6L811.7 355.5Z" fill="#fff" stroke="#0000ff" stroke-width="2.3"/>
<path d="M830.2 357.0L833.3 360.1L830.2 363.2L827.1 360.1Z" fill="#fff" stroke="#0000ff" stroke-width="2.3"/>
<path d="M845.5 361.7L848.6 364.8L845.5 367.9L842.4 364.8Z" fill="#fff" stroke="#0000ff" stroke-width="2.3"/>
<path d="M860.9 366.3L864.0 369.4L860.9 372.5L857.8 369.4Z" fill="#fff" stroke="#0000ff" stroke-width="2.3"/>
<path d="M892.0 386.8L895.1 389.9L892.0 393.0L888.9 389.9Z" fill="#fff" stroke="#0000ff" stroke-width="2.3"/>
<path d="M923.0 407.3L926.1 410.4L923.0 413.5L919.9 410.4Z" fill="#fff" stroke="#0000ff" stroke-width="2.3"/>
<path d="M954.1 427.8L957.2 430.9L954.1 434.0L951.0 430.9Z" fill="#fff" stroke="#0000ff" stroke-width="2.3"/>
<path d="M985.2 448.3L988.3 451.4L985.2 454.5L982.1 451.4Z" fill="#fff" stroke="#0000ff" stroke-width="2.3"/>
<path d="M1016.2 468.8L1019.3 471.9L1016.2 475.0L1013.1 471.9Z" fill="#fff" stroke="#0000ff" stroke-width="2.3"/>
<path d="M1047.3 489.3L1050.4 492.4L1047.3 495.5L1044.2 492.4Z" fill="#fff" stroke="#0000ff" stroke-width="2.3"/>
<path d="M1078.4 509.7L1081.5 512.8L1078.4 515.9L1075.3 512.8Z" fill="#fff" stroke="#0000ff" stroke-width="2.3"/>
<path d="M1109.4 530.2L1112.5 533.3L1109.4 536.4L1106.3 533.3Z" fill="#fff" stroke="#0000ff" stroke-width="2.3"/>
<path d="M1140.5 550.7L1143.6 553.8L1140.5 556.9L1137.4 553.8Z" fill="#fff" stroke="#0000ff" stroke-width="2.3"/>
<path d="M1171.6 571.2L1174.7 574.3L1171.6 577.4L1168.5 574.3Z" fill="#fff" stroke="#0000ff" stroke-width="2.3"/>
<line x1="737.3" y1="309.9" x2="779.5" y2="305.8" stroke="#0000ff" stroke-width="1"/>
<line x1="737.3" y1="309.9" x2="768.4" y2="330.4" stroke="#0000ff" stroke-width="2.6"/>
<circle cx="737.3" cy="309.9" r="5.8" fill="#0000ff"/>
<circle cx="768.4" cy="330.4" r="5.8" fill="#0000ff"/>
<path d="M858.4 248.6 L869.6 310.1 L865.0 355.7 L860.5 401.3 L856.0 446.9 L851.4 492.5 L862.6 553.9 L873.8 615.4 L885.0 676.8 L896.1 738.3" fill="none" stroke="#339966" stroke-width="1" stroke-dasharray="3 3" clip-path="url(#pc)"/>
<path d="M869.6 307.0L872.7 310.1L869.6 313.2L866.5 310.1Z" fill="#fff" stroke="#339966" stroke-width="2.3"/>
<path d="M865.0 352.6L868.1 355.7L865.0 358.8L861.9 355.7Z" fill="#fff" stroke="#339966" stroke-width="2.3"/>
<path d="M860.5 398.2L863.6 401.3L860.5 404.4L857.4 401.3Z" fill="#fff" stroke="#339966" stroke-width="2.3"/>
<path d="M856.0 443.8L859.1 446.9L856.0 450.0L852.9 446.9Z" fill="#fff" stroke="#339966" stroke-width="2.3"/>
<path d="M851.4 489.4L854.5 492.5L851.4 495.6L848.3 492.5Z" fill="#fff" stroke="#339966" stroke-width="2.3"/>
<path d="M862.6 550.8L865.7 553.9L862.6 557.0L859.5 553.9Z" fill="#fff" stroke="#339966" stroke-width="2.3"/>
<path d="M873.8 612.3L876.9 615.4L873.8 618.5L870.7 615.4Z" fill="#fff" stroke="#339966" stroke-width="2.3"/>
<path d="M885.0 673.7L888.1 676.8L885.0 679.9L881.9 676.8Z" fill="#fff" stroke="#339966" stroke-width="2.3"/>
<line x1="847.2" y1="187.2" x2="869.4" y2="224.1" stroke="#339966" stroke-width="1"/>
<line x1="847.2" y1="187.2" x2="858.4" y2="248.6" stroke="#339966" stroke-width="2.6"/>
<circle cx="847.2" cy="187.2" r="5.8" fill="#339966"/>
<circle cx="858.4" cy="248.6" r="5.8" fill="#339966"/>
<line x1="910.9" y1="447.0" x2="937.7" y2="438.3" stroke="#ff0000" stroke-width="2.2"/>
<line x1="910.9" y1="447.0" x2="922.0" y2="422.5" stroke="#ff0000" stroke-width="3.4"/>
<line x1="910.9" y1="447.0" x2="922.0" y2="422.5" stroke="#ffcc00" stroke-width="1.6"/>
<text x="627" y="483.5" text-anchor="middle" font-family="Liberation Serif, serif" font-size="19">-15</text>
<text x="895.5" y="720" text-anchor="end" font-family="Liberation Serif, serif" font-size="19">-15</text>
<text x="722" y="483.5" text-anchor="middle" font-family="Liberation Serif, serif" font-size="19">-10</text>
<text x="895.5" y="631" text-anchor="end" font-family="Liberation Serif, serif" font-size="19">-10</text>
<text x="816" y="483.5" text-anchor="middle" font-family="Liberation Serif, serif" font-size="19">-5</text>
<text x="895.5" y="542" text-anchor="end" font-family="Liberation Serif, serif" font-size="19">-5</text>
<text x="910" y="483.5" text-anchor="middle" font-family="Liberation Serif, serif" font-size="19">0</text>
<text x="895.5" y="453" text-anchor="end" font-family="Liberation Serif, serif" font-size="19">0</text>
<text x="1005" y="483.5" text-anchor="middle" font-family="Liberation Serif, serif" font-size="19">5</text>
<text x="895.5" y="364" text-anchor="end" font-family="Liberation Serif, serif" font-size="19">5</text>
<text x="1099" y="483.5" text-anchor="middle" font-family="Liberation Serif, serif" font-size="19">10</text>
<text x="895.5" y="275" text-anchor="end" font-family="Liberation Serif, serif" font-size="19">10</text>
<text x="1194" y="483.5" text-anchor="middle" font-family="Liberation Serif, serif" font-size="19">15</text>
<text x="895.5" y="186" text-anchor="end" font-family="Liberation Serif, serif" font-size="19">15</text>
</svg>
<div class="abs" style="left:53px;top:796px;width:712px;height:180px;background:#fff"></div>
<svg class="abs" style="left:0;top:790px" width="800" height="195" viewBox="0 790 800 195"><defs><linearGradient id="wv" x1="0" y1="0" x2="0" y2="1"><stop offset="0" stop-color="#1d6fb8"/><stop offset=".45" stop-color="#bfe3f7"/><stop offset=".7" stop-color="#5aa9dc"/><stop offset="1" stop-color="#1a2f52"/></linearGradient><filter id="bl1"><feGaussianBlur stdDeviation="0.7"/></filter><filter id="bl2"><feGaussianBlur stdDeviation="1.1"/></filter></defs><g filter="url(#bl1)"><rect x="129" y="808" width="115" height="164" fill="#0a0a14"/><rect x="125" y="804" width="115" height="164" fill="#1262b3"/><rect x="127" y="806" width="111" height="160" fill="#fff"/><rect x="133" y="811.500" width="101" height="150" fill="#0b5fae"/><text x="139" y="875" textLength="90" lengthAdjust="spacingAndGlyphs" font-family="Liberation Serif, serif" font-weight="bold" font-size="56" fill="#ffee00" stroke="#ffee00" stroke-width="1.6">BGI</text></g><g filter="url(#bl2)"><path d="M244 935C252 942 262 944 268 934C271 929 272 923 273 917" fill="none" stroke="#0a0f1c" stroke-width="7" stroke-linecap="round"/><path d="M100 959C106 948 112 936 119 924" fill="none" stroke="#1a2c48" stroke-width="5" stroke-linecap="round"/><path d="M104 952C112 936 125 906 142 903C158 902 164 937 177 938C191 939 203 913 218 912C231 912 237 932 247 936" fill="none" stroke="#163055" stroke-width="15" stroke-linecap="round" transform="translate(0 1.5)"/><path d="M117 926C124 913 132 904 142 903C158 902 164 937 177 938C191 939 203 913 218 912C231 912 237 932 247 936" fill="none" stroke="#2f86d0" stroke-width="13" stroke-linecap="round"/><path d="M117 926C124 913 132 904 142 903C158 902 164 937 177 938C191 939 203 913 218 912C231 912 237 932 247 936" fill="none" stroke="#7cc0ee" stroke-width="8" stroke-linecap="round" transform="translate(0 -1)"/><path d="M150 907C161 912 166 934 177 935C188 935 197 920 206 914" fill="none" stroke="#ffffff" stroke-width="7" stroke-linecap="round"/><path d="M224 913C232 916 237 929 245 933" fill="none" stroke="#ffffff" stroke-width="6" stroke-linecap="round"/></g><g filter="url(#bl1)" font-family="Liberation Serif, serif" fill="#0c0c0c" stroke="#0c0c0c" stroke-width="1.4"><text transform="scale(0.9 1)" x="332.5 369.2 414.0 454.1 492.7 518.1 528.1 602.8 653.5 696.5 746.6 802.7" y="910" font-size="57">BALTIC GROUP</text><text x="300.2 325.0 364.5 401.9 440.0 478.2 519.3 558.9 592.7 615.6 659.7 699.2 734.7" y="962.500" font-size="39">INTERNATIONAL</text></g><rect x="300" y="967" width="450" height="4" fill="#f6f6f6" filter="url(#bl2)"/></svg>
<div class="abs" id="titlebar" style="left:0;top:0;width:1222px;height:26px;overflow:hidden;background:linear-gradient(90deg,#e1e8f1 0,#d9e2ee 150px,#c6d3e4 215px,#bccbdf 300px,#adc3dc 320px,#a9c3de 900px,#8dabc9 950px,#86a5c4 1050px,#7b9cbc 1222px)">
<div class="abs" style="left:310px;top:5px;width:302px;height:30px;border-radius:8px 8px 0 0;background:#c9dbf0;filter:blur(1.6px)"></div>
<div class="abs" style="left:610px;top:7px;width:296px;height:30px;border-radius:8px 8px 0 0;background:#acc6e1;filter:blur(1.6px)"></div>
<div class="abs" style="left:210px;top:-4px;width:1020px;height:8px;background:#9fb5cf;filter:blur(2.5px);opacity:.8"></div>
<div class="abs" style="left:0;top:0;width:1222px;height:26px;background:linear-gradient(180deg,rgba(255,255,255,.18) 0,rgba(255,255,255,0) 60%,rgba(40,70,110,.10) 100%)"></div>
<div class="abs" style="left:336px;top:11px;width:20px;height:18px;border-radius:50%;background:#4f95dc;filter:blur(2.5px);opacity:.85"></div>
<div class="abs" style="left:372px;top:17px;width:196px;height:6px;background:#7088a8;filter:blur(2.5px);opacity:.75"></div>
<div class="abs" style="left:202px;top:16px;width:52px;height:6px;background:#8093ad;filter:blur(3px);opacity:.55"></div>
<div class="abs" style="left:287px;top:15px;width:9px;height:8px;background:#56698a;filter:blur(2.5px);opacity:.7"></div>
<div class="abs" style="left:586px;top:15px;width:9px;height:8px;background:#56698a;filter:blur(2.5px);opacity:.7"></div>
<div class="abs" style="left:631px;top:9px;width:9px;height:18px;background:#c8485c;filter:blur(2.5px);opacity:.7"></div>
<div class="abs" style="left:660px;top:17px;width:180px;height:6px;background:#6f88a8;filter:blur(2.5px);opacity:.65"></div>
<div class="abs" style="left:885px;top:15px;width:9px;height:8px;background:#56698a;filter:blur(2.5px);opacity:.55"></div>
<div class="abs" style="left:919px;top:3px;width:34px;height:32px;border-radius:50%;background:#b9d0e8;filter:blur(3.5px);opacity:.85"></div>
<div class="abs" style="left:932px;top:14px;width:9px;height:9px;border-radius:50%;background:#5f7fa5;filter:blur(2px);opacity:.85"></div>
</div>
<div class="abs" style="left:0;top:24px;width:1222px;height:1px;background:#eef2f7"></div>
<div class="abs" style="left:0;top:25px;width:1222px;height:1px;background:#66778c"></div>
<svg class="abs" style="left:2px;top:3px" width="21" height="20" viewBox="0 0 21 20"><rect x="0.5" y="0.5" width="20" height="19" fill="#eef3ee" stroke="#4c6b4c"/><rect x="2" y="2" width="17" height="16" fill="#dfeadf"/><path d="M5 5.500L15.500 15M15.500 5.500L5 15" stroke="#1f7a2e" stroke-width="3" fill="none"/><path d="M2 2h17v4h-17z" fill="#fff" opacity=".35"/></svg>
<div class="abs" style="left:26px;top:2px;font:15.2px/22px 'Liberation Sans',sans-serif;color:#000;white-space:nowrap;letter-spacing:-0.25px">Microsoft Excel - planshet</div>
<div class="abs" style="left:0;top:26px;width:1222px;height:32px;background:linear-gradient(90deg,#9ebef5 0,#a8c5f6 400px,#c2d8fa 1000px,#c4dafa 1222px)"></div>
<div class="abs" style="left:0;top:26px;width:2px;height:90px;background:#7d99c9"></div>
<svg class="abs" style="left:0;top:26px" width="1222" height="90" viewBox="0 26 1222 90"><rect x="6" y="34" width="2" height="2" fill="#27418a"/><rect x="7" y="35" width="2" height="2" fill="#fff" opacity=".9"/><rect x="6" y="34" width="2" height="2" fill="#27418a"/><rect x="6" y="39" width="2" height="2" fill="#27418a"/><rect x="7" y="40" width="2" height="2" fill="#fff" opacity=".9"/><rect x="6" y="39" width="2" height="2" fill="#27418a"/><rect x="6" y="44" width="2" height="2" fill="#27418a"/><rect x="7" y="45" width="2" height="2" fill="#fff" opacity=".9"/><rect x="6" y="44" width="2" height="2" fill="#27418a"/><rect x="6" y="49" width="2" height="2" fill="#27418a"/><rect x="7" y="50" width="2" height="2" fill="#fff" opacity=".9"/><rect x="6" y="49" width="2" height="2" fill="#27418a"/><g><path d="M17 31.5h14.5l4 4v17.5h-18.5z" fill="#f4f7fb" stroke="#5a6f99"/><path d="M20 46h12M20 49h12" stroke="#9fb3d6"/><rect x="12.5" y="33.5" width="15" height="13" fill="#2e8b3a" stroke="#1c5a25"/><path d="M15.5 36l8 8M23.5 36l-8 8" stroke="#fff" stroke-width="2"/></g></svg>
<div class="abs mn" style="left:43px;top:32px;width:35.5px"><u>Ф</u>айл</div>
<div class="abs mn" style="left:95px;top:32px;width:50.5px"><u>П</u>равка</div>
<div class="abs mn" style="left:162.5px;top:32px;width:25px"><u>В</u>ид</div>
<div class="abs mn" style="left:204px;top:32px;width:52px">Вст<u>а</u>вка</div>
<div class="abs mn" style="left:273px;top:32px;width:53px">Фор<u>м</u>ат</div>
<div class="abs mn" style="left:343px;top:32px;width:50px">С<u>е</u>рвис</div>
<div class="abs mn" style="left:409px;top:32px;width:54px"><u>Д</u>анные</div>
<div class="abs mn" style="left:480px;top:32px;width:35px"><u>О</u>кно</div>
<div class="abs mn" style="left:531.5px;top:32px;width:57.5px"><u>С</u>правка</div>
<div class="abs" style="left:0;top:58px;width:1222px;height:33px;background:linear-gradient(90deg,#9ebef5 0,#a8c5f6 400px,#c2d8fa 1000px,#c4dafa 1222px)"></div>
<div class="abs" style="left:2px;top:59px;width:813px;height:29px;border-radius:3px 0 0 3px;background:linear-gradient(180deg,#dcebfd 0,#d2e3fb 25%,#bdd4f6 55%,#9cbdee 82%,#86abe4 100%);border-bottom:1px solid #4a6fb5"></div>
<div class="abs" style="left:813px;top:58px;width:16px;height:31px;border-radius:0 4px 4px 0;background:linear-gradient(180deg,#7ea2e3 0,#4a73c8 40%,#17348f 75%,#0a2478 100%)"></div>
<svg class="abs" style="left:813px;top:58px" width="16" height="31" viewBox="0 0 16 31"><path d="M4.5 21.5h8" stroke="#fff" stroke-width="1.4"/><path d="M4 24.5h9l-4.5 4.5z" fill="#fff"/><path d="M4.8 24.9h7.2l-3.6 3.6z" fill="#0a1a50"/></svg>
<div class="abs" style="left:832px;top:59px;width:400px;height:29px;border-radius:3px 0 0 3px;background:linear-gradient(180deg,#dcebfd 0,#d2e3fb 25%,#bdd4f6 55%,#9cbdee 82%,#86abe4 100%);border-bottom:1px solid #4a6fb5"></div>
<div class="abs" style="left:692px;top:61px;width:92px;height:25px;background:#fff"></div><div class="abs" style="left:768px;top:62px;width:15px;height:23px;background:linear-gradient(180deg,#d9e6fa,#b5cdf3)"></div><div class="abs tb" style="left:695px;top:62px">150%</div><div class="abs" style="left:842px;top:61px;width:204px;height:25px;background:#fff"></div><div class="abs" style="left:1030px;top:62px;width:15px;height:23px;background:linear-gradient(180deg,#d9e6fa,#b5cdf3)"></div><div class="abs tb" style="left:846px;top:62px">Arial</div><div class="abs" style="left:1048px;top:61px;width:62px;height:25px;background:#fff"></div><div class="abs" style="left:1094px;top:62px;width:15px;height:23px;background:linear-gradient(180deg,#d9e6fa,#b5cdf3)"></div><div class="abs tb" style="left:1051px;top:62px">8</div><svg class="abs" style="left:0;top:58px" width="1222" height="32" viewBox="0 58 1222 32"><defs><linearGradient id="pg" x1="0" y1="0" x2="1" y2="1"><stop offset="0" stop-color="#fff"/><stop offset="1" stop-color="#d5dfef"/></linearGradient><linearGradient id="fold" x1="0" y1="0" x2="0" y2="1"><stop offset="0" stop-color="#ffe89a"/><stop offset="1" stop-color="#e0a624"/></linearGradient><radialGradient id="lens" cx=".4" cy=".35" r=".7"><stop offset="0" stop-color="#fff"/><stop offset="1" stop-color="#b8cbe6"/></radialGradient><radialGradient id="help" cx=".4" cy=".3" r=".8"><stop offset="0" stop-color="#8fb4f5"/><stop offset="1" stop-color="#1f4fc0"/></radialGradient></defs><rect x="6" y="65" width="2" height="2" fill="#fff"/><rect x="5" y="64" width="2" height="2" fill="#27418a"/><rect x="6" y="70" width="2" height="2" fill="#fff"/><rect x="5" y="69" width="2" height="2" fill="#27418a"/><rect x="6" y="75" width="2" height="2" fill="#fff"/><rect x="5" y="74" width="2" height="2" fill="#27418a"/><rect x="6" y="80" width="2" height="2" fill="#fff"/><rect x="5" y="79" width="2" height="2" fill="#27418a"/><rect x="836" y="65" width="2" height="2" fill="#fff"/><rect x="835" y="64" width="2" height="2" fill="#27418a"/><rect x="836" y="70" width="2" height="2" fill="#fff"/><rect x="835" y="69" width="2" height="2" fill="#27418a"/><rect x="836" y="75" width="2" height="2" fill="#fff"/><rect x="835" y="74" width="2" height="2" fill="#27418a"/><rect x="836" y="80" width="2" height="2" fill="#fff"/><rect x="835" y="79" width="2" height="2" fill="#27418a"/><rect x="152" y="63" width="1" height="19" fill="#6a8ccb"/><rect x="153" y="64" width="1" height="19" fill="#fff"/><rect x="215" y="63" width="1" height="19" fill="#6a8ccb"/><rect x="216" y="64" width="1" height="19" fill="#fff"/><rect x="276" y="63" width="1" height="19" fill="#6a8ccb"/><rect x="277" y="64" width="1" height="19" fill="#fff"/><rect x="406" y="63" width="1" height="19" fill="#6a8ccb"/><rect x="407" y="64" width="1" height="19" fill="#fff"/><rect x="499" y="63" width="1" height="19" fill="#6a8ccb"/><rect x="500" y="64" width="1" height="19" fill="#fff"/><rect x="629" y="63" width="1" height="19" fill="#6a8ccb"/><rect x="630" y="64" width="1" height="19" fill="#fff"/><rect x="1112" y="63" width="1" height="19" fill="#6a8ccb"/><rect x="1113" y="64" width="1" height="19" fill="#fff"/><rect x="1203" y="63" width="1" height="19" fill="#6a8ccb"/><rect x="1204" y="64" width="1" height="19" fill="#fff"/><path d="M17.5 64.5h10l4 4v14h-14z" fill="url(#pg)" stroke="#7083a8"/><path d="M27.5 64.5v4h4" fill="#e8eef8" stroke="#7083a8"/><path d="M44.5 81.5v-13.5h5l2 2h7v3" fill="#f7d774" stroke="#a87d1c"/><path d="M44.5 81.5l3.5-9h14.5l-3.5 9z" fill="url(#fold)" stroke="#a87d1c"/><path d="M55 66.5c2-2.5 5-2.500 6.500 0" fill="none" stroke="#5b7bb5" stroke-width="1.5"/><path d="M59.5 66l3.500-1l-.5 3.800z" fill="#5b7bb5"/><path d="M72.500 64.500h17v17h-15l-2-2z" fill="#5a5ad0" stroke="#33338a"/><rect x="75.500" y="64.500" width="11" height="7.500" fill="#f4f6fc" stroke="#8b8bd8"/><rect x="76.500" y="75.500" width="9" height="6" fill="#c9cfe0" stroke="#33338a"/><rect x="78" y="77" width="3" height="4" fill="#222"/><path d="M101.5 64.5h9l4 4v13h-13z" fill="url(#pg)" stroke="#7083a8"/><path d="M110.5 64.5v4h4" fill="#e8eef8" stroke="#7083a8"/><circle cx="113" cy="79" r="5.200" fill="#d8371c" stroke="#9a1c0c" stroke-width=".8"/><rect x="109.800" y="78" width="6.400" height="2.200" fill="#fff"/><path d="M131.500 73l7-8h4l5 8z" fill="#e9eef8" stroke="#8a96ad"/><rect x="128.500" y="72.500" width="17" height="9" fill="#dfe5f0" stroke="#7a869d"/><rect x="130.500" y="75" width="6" height="1.500" fill="#8d9bb8"/><rect x="130.500" y="78" width="6" height="1.500" fill="#8d9bb8"/><rect x="138" y="75" width="6" height="4.500" fill="#f8fafd" stroke="#9aa6bd" stroke-width=".6"/><rect x="142.500" y="67" width="2.500" height="2.500" fill="#e0321c"/><path d="M164.500 70l2-6h9l2 6z" fill="#fbfcfe" stroke="#7d8699"/><path d="M161.500 71.500l2-2h14l2 2v8.500h-18z" fill="#d7dbe4" stroke="#6d7589"/><rect x="161.500" y="76.500" width="18" height="5" fill="#b4bac8" stroke="#6d7589"/><rect x="173" y="73.500" width="4" height="3" fill="#2fc52f"/><path d="M189.5 64.5h9l4 4v13h-13z" fill="url(#pg)" stroke="#7083a8"/><path d="M198.5 64.5v4h4" fill="#e8eef8" stroke="#7083a8"/><circle cx="201" cy="74" r="4.600" fill="url(#lens)" stroke="#7d8aa5" stroke-width="1.200"/><path d="M204.300 77.300l3.700 4" stroke="#d8941c" stroke-width="3" stroke-linecap="round"/><text x="225" y="70" font-family="Liberation Sans, sans-serif" font-size="7.500" font-weight="bold" fill="#8fa5d0">ABC</text><path d="M227 75l4 5.500l8-11" fill="none" stroke="#9fb2d8" stroke-width="2.800"/><rect x="251.500" y="65.500" width="5" height="16" fill="#7c63c8" stroke="#4a3a90"/><rect x="256.500" y="64.500" width="5" height="17" fill="#9a86dd" stroke="#4a3a90"/><rect x="261.500" y="65.500" width="5" height="16" fill="#e7c24f" stroke="#9a7a1c"/><circle cx="263" cy="74" r="4.600" fill="url(#lens)" stroke="#7d8aa5" stroke-width="1.200"/><path d="M266.300 77.300l3.700 4" stroke="#d8941c" stroke-width="3" stroke-linecap="round"/><path d="M289.500 64l5.500 11M299 64l-5.500 11" stroke="#8b95a8" stroke-width="2.200" fill="none"/><circle cx="290.500" cy="78.500" r="2.800" fill="none" stroke="#3c63c4" stroke-width="2"/><circle cx="298" cy="78.500" r="2.800" fill="none" stroke="#3c63c4" stroke-width="2"/><path d="M313.5 64.5h7l3 3v9h-10z" fill="url(#pg)" stroke="#7083a8"/><path d="M320.5 64.5v3h3" fill="#e8eef8" stroke="#7083a8"/><path d="M315.500 69h6M315.500 71.500h6M315.500 74h6" stroke="#5d83d0" stroke-width="1"/><path d="M320.5 69.5h8l3 3v10h-11z" fill="url(#pg)" stroke="#7083a8"/><path d="M328.5 69.5v3h3" fill="#e8eef8" stroke="#7083a8"/><path d="M322.500 74.500h7M322.500 77h7M322.500 79.500h7" stroke="#5d83d0" stroke-width="1"/><rect x="340.500" y="66.500" width="15" height="15.500" rx="1" fill="#e6b437" stroke="#8f6a14"/><rect x="344.500" y="64.500" width="7" height="4" rx="1" fill="#d9dde6" stroke="#6d7589"/><rect x="348.500" y="73.500" width="10" height="8.500" fill="#f6f8fc" stroke="#6d7589"/><path d="M350.500 76.500h6M350.500 79h6" stroke="#8d9bb8"/><path d="M366.5 70.5h9l-4.5 5.0z" fill="#000"/><path d="M384 76l8-7l4 4.500l-6 8.500q-5-1-6-6z" fill="#f3da6a" stroke="#a88a24" stroke-width=".8"/><path d="M391.500 68.500l4.500 5" stroke="#8a8f9c" stroke-width="3"/><path d="M395 69l4.500-5" stroke="#5a45b8" stroke-width="3.200" stroke-linecap="round"/><path d="M420 69.500c6-4.500 11.500 0 9 6.500q-1.500 3.500-4 5" fill="none" stroke="#a0b4dc" stroke-width="3"/><path d="M417 66.500l.5 7.500l6.500-3z" fill="#a0b4dc"/><path d="M443.0 70.5h8l-4.0 4.5z" fill="#8c8c8c"/><path d="M471 69.500c-6-4.500-11.500 0-9 6.500q1.500 3.500 4 5" fill="none" stroke="#a0b4dc" stroke-width="3"/><path d="M474 66.500l-.5 7.500l-6.500-3z" fill="#a0b4dc"/><path d="M484.0 70.5h8l-4.0 4.5z" fill="#8c8c8c"/><circle cx="515.500" cy="70.500" r="6.800" fill="#aebfe0" stroke="#93a7d0"/><path d="M511 69a5 5 0 0 1 6-4" stroke="#dbe5f6" stroke-width="2" fill="none"/><rect x="509.500" y="76.500" width="7" height="5" rx="2.500" fill="none" stroke="#94a8d2" stroke-width="1.800"/><rect x="517.500" y="76.500" width="7" height="5" rx="2.500" fill="none" stroke="#94a8d2" stroke-width="1.800"/><path d="M514 79h6" stroke="#eef3fb" stroke-width="1.400"/><text x="537" y="78.500" font-family="Liberation Serif, serif" font-size="18.500" font-weight="bold" fill="#5a70ad">Σ</text><path d="M561.0 70.5h8l-4.0 4.5z" fill="#8c8c8c"/><text x="578" y="71.500" font-family="Liberation Serif, serif" font-size="10.500" font-weight="bold" fill="#95a9d4">А</text><text x="578" y="82" font-family="Liberation Serif, serif" font-size="10.500" font-weight="bold" fill="#a9b3c7">Я</text><path d="M592.500 63v17" stroke="#6e86bd" stroke-width="1.300"/><path d="M589.500 76.500h6l-3 5z" fill="#6e86bd"/><text x="605" y="71.500" font-family="Liberation Serif, serif" font-size="10.500" font-weight="bold" fill="#a9b3c7">Я</text><text x="605" y="82" font-family="Liberation Serif, serif" font-size="10.500" font-weight="bold" fill="#95a9d4">А</text><path d="M619.500 63v17" stroke="#8397c4" stroke-width="1.300"/><path d="M616.500 76.500h6l-3 5z" fill="#8397c4"/><rect x="640.500" y="69.500" width="4" height="11" fill="#c6d2ea" stroke="#9fb0d6"/><rect x="646.500" y="65.500" width="4" height="15" fill="#c6d2ea" stroke="#9fb0d6"/><rect x="652.500" y="68.500" width="4" height="12" fill="#c6d2ea" stroke="#9fb0d6"/><path d="M639 81.500h20" stroke="#9fb0d6"/><rect x="674.500" y="64.500" width="9" height="8" fill="#e7c24f" stroke="#9a7a1c"/><ellipse cx="680" cy="77" rx="5.500" ry="4.500" fill="#dfe5f0" stroke="#8a96ad"/><text x="667" y="80" font-family="Liberation Sans, sans-serif" font-size="17" font-weight="bold" font-style="italic" fill="#6a55c0" stroke="#4a3a90" stroke-width=".4">A</text><path d="M771.5 70.5h8l-4.0 4.5z" fill="#000"/><path d="M1033.5 70.5h8l-4.0 4.5z" fill="#000"/><path d="M1097.5 70.5h8l-4.0 4.5z" fill="#000"/><circle cx="799" cy="72" r="8.300" fill="url(#help)" stroke="#e6eefc" stroke-width="1.600"/><text x="799" y="77" text-anchor="middle" font-family="Liberation Sans, sans-serif" font-size="13.500" font-weight="bold" fill="#fff">?</text><rect x="1212" y="65" width="12" height="1.600" fill="#6d7fae"/><rect x="1212" y="68" width="12" height="1.600" fill="#6d7fae"/><rect x="1212" y="71" width="12" height="1.600" fill="#6d7fae"/><rect x="1212" y="74" width="12" height="1.600" fill="#6d7fae"/><rect x="1212" y="77" width="12" height="1.600" fill="#6d7fae"/><rect x="1212" y="80" width="12" height="1.600" fill="#6d7fae"/></svg>
<div class="abs" style="left:1117px;top:60px;width:26px;height:25px;border:1px solid #4b5f92;background:linear-gradient(180deg,#ffb458,#ffc98a)"></div><div class="abs" style="left:1117px;top:60px;width:28px;height:27px;font:bold 16.5px/26px 'Liberation Serif',serif;color:#5c6f9e;text-align:center">Ж</div><div class="abs" style="left:1146px;top:60px;width:28px;height:27px;font:italic 17px/26px 'Liberation Serif',serif;color:#5c74b0;text-align:center">К</div><div class="abs" style="left:1173px;top:60px;width:28px;height:27px;font:bold 15px/25px 'Liberation Serif',serif;color:#5c74b0;text-align:center;text-decoration:underline">Ч</div><div class="abs" style="left:0;top:90px;width:1222px;height:22px;background:linear-gradient(90deg,#9ebef5 0,#a8c5f6 400px,#c2d8fa 1000px,#c4dafa 1222px)"></div>
<div class="abs" style="left:3px;top:91px;width:147px;height:20px;background:#fff"></div><div class="abs" style="left:243px;top:91px;width:979px;height:20px;background:#fff"></div>
<div class="abs" style="left:3px;top:90px;width:147px;font:16.3px/21px 'Liberation Sans',sans-serif;text-align:center">I20</div><div class="abs" style="left:253px;top:90px;font:16.3px/21px 'Liberation Sans',sans-serif;white-space:nowrap">САНКТ-ПЕТЕРБУРГ</div><svg class="abs" style="left:150px;top:90px" width="93" height="22" viewBox="150 90 93 22"><path d="M156 98.5h10l-5 5z" fill="#000"/><text x="228.500" y="105.500" font-family="Liberation Serif, serif" font-style="italic" font-weight="bold" font-size="14" fill="#000">f</text><text x="233" y="107" font-family="Liberation Sans, sans-serif" font-weight="bold" font-style="italic" font-size="8.500" fill="#000">x</text></svg>
<div class="abs" style="left:0;top:0;width:2px;height:26px;background:#8799ad;opacity:.0"></div><div class="abs" style="left:840px;top:799.71px;font:bold 19.6px/30px 'Liberation Sans',sans-serif;white-space:nowrap;color:#000">САНКТ-ПЕТЕРБУРГ</div>
<div class="abs" style="left:840px;top:832.67px;font:19.7px/30px 'Liberation Sans',sans-serif;white-space:nowrap;color:#000">Владимирский пр., д. 23, лит. А,</div>
<div class="abs" style="left:840px;top:865.67px;font:19.7px/30px 'Liberation Sans',sans-serif;white-space:nowrap;color:#000">“Регент холл”, 5-й этаж,</div>
<div class="abs" style="left:840px;top:898.64px;font:19.8px/30px 'Liberation Sans',sans-serif;white-space:nowrap;color:#000">г. Санкт-Петербург 191002 Россия</div>
<div class="abs" style="left:840px;top:964.67px;font:19.7px/30px 'Liberation Sans',sans-serif;white-space:nowrap;color:#000">Тел.: +7 812 346 80 08</div>
<div class="abs" style="left:834px;top:795px;width:78px;height:30px;border:3px solid #000"></div><div class="abs" style="left:913px;top:826px;width:6px;height:6px;background:#000;border:1px solid #fff;border-right:0;border-bottom:0"></div><svg class="abs" style="left:0;top:780px" width="1222" height="205" viewBox="0 780 1222 205"><defs><clipPath id="up"><rect x="0" y="780" width="1222" height="115"/></clipPath><clipPath id="lo"><rect x="0" y="895" width="1222" height="90"/></clipPath><mask id="wm" maskUnits="userSpaceOnUse" x="0" y="780" width="1222" height="205"><rect x="0" y="780" width="1222" height="205" fill="#000"/><polygon points="89.0,806.0 97.3,841.7 116.2,810.3 113.1,846.8 140.7,822.8 126.5,856.5 160.2,842.3 136.2,869.9 172.7,866.8 141.3,885.7 177.0,894.0 141.3,902.3 172.7,921.2 136.2,918.1 160.2,945.7 126.5,931.5 140.7,965.2 113.1,941.2 116.2,977.7 97.3,946.3 89.0,982.0 80.7,946.3 61.8,977.7 64.9,941.2 37.3,965.2 51.5,931.5 17.8,945.7 41.8,918.1 5.3,921.2 36.7,902.3 1.0,894.0 36.7,885.7 5.3,866.8 41.8,869.9 17.8,842.3 51.5,856.5 37.3,822.8 64.9,846.8 61.8,810.3 80.7,841.7" fill="#fff"/><path d="M41 895.5A48 48 0 0 1 137 895.5Z" fill="#000"/><path d="M41 895H236V942H89A48 48 0 0 1 41 895Z" fill="#fff"/><rect x="230" y="895" width="500" height="42" fill="#fff"/><g clip-path="url(#up)"><text y="935" font-family="DejaVu Serif, serif" font-weight="bold" font-size="114" fill="#fff" stroke="#fff" stroke-width="13" stroke-linejoin="round"><tspan x="200.9" textLength="58.2" lengthAdjust="spacingAndGlyphs">S</tspan><tspan x="267.9" textLength="68.2" lengthAdjust="spacingAndGlyphs">E</tspan><tspan x="337.9" textLength="108.2" lengthAdjust="spacingAndGlyphs">A</tspan><tspan x="441.9" textLength="78.2" lengthAdjust="spacingAndGlyphs">T</tspan><tspan x="521.9" textLength="78.2" lengthAdjust="spacingAndGlyphs">R</tspan><tspan x="583.9" textLength="96.2" lengthAdjust="spacingAndGlyphs">A</tspan><tspan x="677.9" textLength="58.2" lengthAdjust="spacingAndGlyphs">C</tspan><tspan x="737.9" textLength="88.2" lengthAdjust="spacingAndGlyphs">K</tspan><tspan x="828.9" textLength="74.2" lengthAdjust="spacingAndGlyphs">E</tspan><tspan x="906.9" textLength="101.2" lengthAdjust="spacingAndGlyphs">R</tspan><tspan x="1003.9" textLength="18.2" lengthAdjust="spacingAndGlyphs">.</tspan><tspan x="1027.9" textLength="100.2" lengthAdjust="spacingAndGlyphs">R</tspan><tspan x="1120.9" textLength="80.2" lengthAdjust="spacingAndGlyphs">U</tspan></text><text y="935" font-family="DejaVu Serif, serif" font-weight="bold" font-size="114" fill="#000" stroke="#000" stroke-width="6.6" stroke-linejoin="round"><tspan x="200.9" textLength="58.2" lengthAdjust="spacingAndGlyphs">S</tspan><tspan x="267.9" textLength="68.2" lengthAdjust="spacingAndGlyphs">E</tspan><tspan x="337.9" textLength="108.2" lengthAdjust="spacingAndGlyphs">A</tspan><tspan x="441.9" textLength="78.2" lengthAdjust="spacingAndGlyphs">T</tspan><tspan x="521.9" textLength="78.2" lengthAdjust="spacingAndGlyphs">R</tspan><tspan x="583.9" textLength="96.2" lengthAdjust="spacingAndGlyphs">A</tspan><tspan x="677.9" textLength="58.2" lengthAdjust="spacingAndGlyphs">C</tspan><tspan x="737.9" textLength="88.2" lengthAdjust="spacingAndGlyphs">K</tspan><tspan x="828.9" textLength="74.2" lengthAdjust="spacingAndGlyphs">E</tspan><tspan x="906.9" textLength="101.2" lengthAdjust="spacingAndGlyphs">R</tspan><tspan x="1003.9" textLength="18.2" lengthAdjust="spacingAndGlyphs">.</tspan><tspan x="1027.9" textLength="100.2" lengthAdjust="spacingAndGlyphs">R</tspan><tspan x="1120.9" textLength="80.2" lengthAdjust="spacingAndGlyphs">U</tspan></text></g><g clip-path="url(#lo)"><text y="935" font-family="DejaVu Serif, serif" font-weight="bold" font-size="114" fill="#fff" stroke="#fff" stroke-width="13" stroke-linejoin="round"><tspan x="200.9" textLength="58.2" lengthAdjust="spacingAndGlyphs">S</tspan><tspan x="267.9" textLength="68.2" lengthAdjust="spacingAndGlyphs">E</tspan><tspan x="337.9" textLength="108.2" lengthAdjust="spacingAndGlyphs">A</tspan><tspan x="441.9" textLength="78.2" lengthAdjust="spacingAndGlyphs">T</tspan><tspan x="521.9" textLength="78.2" lengthAdjust="spacingAndGlyphs">R</tspan><tspan x="583.9" textLength="96.2" lengthAdjust="spacingAndGlyphs">A</tspan><tspan x="677.9" textLength="58.2" lengthAdjust="spacingAndGlyphs">C</tspan><tspan x="737.9" textLength="88.2" lengthAdjust="spacingAndGlyphs">K</tspan><tspan x="828.9" textLength="74.2" lengthAdjust="spacingAndGlyphs">E</tspan><tspan x="906.9" textLength="101.2" lengthAdjust="spacingAndGlyphs">R</tspan><tspan x="1003.9" textLength="18.2" lengthAdjust="spacingAndGlyphs">.</tspan><tspan x="1027.9" textLength="100.2" lengthAdjust="spacingAndGlyphs">R</tspan><tspan x="1120.9" textLength="80.2" lengthAdjust="spacingAndGlyphs">U</tspan></text></g></mask></defs><path d="M41 895A48 48 0 0 1 137 895Z" fill="#fff" opacity=".93"/><rect x="0" y="780" width="1222" height="205" fill="#006ca7" opacity=".6" mask="url(#wm)"/></svg>
</body></html>
